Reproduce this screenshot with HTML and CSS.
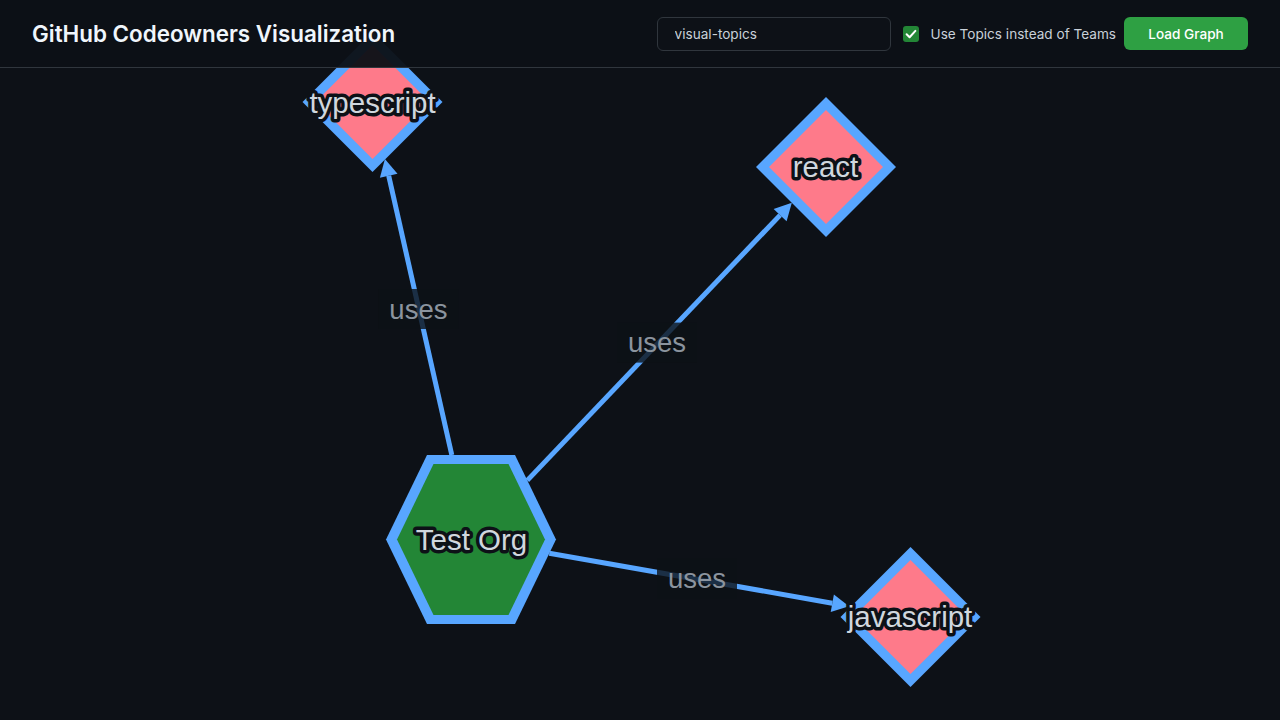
FILE: index.html
```html
<!DOCTYPE html>
<html lang="en">
<head>
<meta charset="utf-8">
<title>GitHub Codeowners Visualization</title>
<link rel="stylesheet" href="styles.css">
</head>
<body>
<header class="topbar">
  <h1 class="title">GitHub Codeowners Visualization</h1>
  <div class="controls">
    <input class="org-input" type="text" value="visual-topics">
    <label class="toggle">
      <span class="checkbox">
        <svg width="16" height="16" viewBox="0 0 16 16"><path d="M3.6 8.3 L6.6 11.2 L12.4 4.9" fill="none" stroke="#ffffff" stroke-width="2" stroke-linecap="round" stroke-linejoin="round"/></svg>
      </span>
      <span class="toggle-text">Use Topics instead of Teams</span>
    </label>
    <button class="load-btn" type="button">Load Graph</button>
  </div>
</header>
<main class="canvas">
  <svg class="graph" width="1280" height="652" viewBox="0 68 1280 652">
    <g class="edges">
      <line x1="451.8" y1="455" x2="388.7" y2="175.7" class="edge"/>
      <polygon points="384.9,159.1 397.5,173.7 379.9,177.7" class="arrow"/>
      <line x1="527.3" y1="480.4" x2="780.1" y2="215.1" class="edge"/>
      <polygon points="791.8,202.8 786.6,221.3 773.6,208.9" class="arrow"/>
      <line x1="549.3" y1="553.3" x2="832.3" y2="603.2" class="edge"/>
      <polygon points="849,606.2 830.7,612.1 833.9,594.4" class="arrow"/>
    </g>
    <g class="edge-labels">
      <rect x="378.4" y="289" width="80" height="40" class="label-bg"/>
      <text x="418.4" y="309" class="edge-label">uses</text>
      <rect x="617" y="322.6" width="80" height="40" class="label-bg"/>
      <text x="657" y="342.6" class="edge-label">uses</text>
      <rect x="657" y="558.5" width="80" height="40" class="label-bg"/>
      <text x="697" y="578.5" class="edge-label">uses</text>
    </g>
    <g class="nodes">
      <polygon points="372.5,32 442.5,102 372.5,172 302.5,102" class="node-border"/>
      <polygon points="372.5,45 429.5,102 372.5,159 315.5,102" class="topic-fill"/>
      <polygon points="826,97 896,167 826,237 756,167" class="node-border"/>
      <polygon points="826,110 883,167 826,224 769,167" class="topic-fill"/>
      <polygon points="910.5,547 980.5,617 910.5,687 840.5,617" class="node-border"/>
      <polygon points="910.5,560 967.5,617 910.5,674 853.5,617" class="topic-fill"/>
      <polygon points="386,539.5 427,455 515,455 556,539.5 515,624 427,624" class="node-border"/>
      <polygon points="397,539.5 433.5,464 508.5,464 545,539.5 508.5,615 433.5,615" class="org-fill"/>
    </g>
    <g class="node-labels">
      <text x="372.5" y="102.5" class="node-label">typescript</text>
      <text x="825.5" y="166.5" class="node-label">react</text>
      <text x="910" y="616.5" class="node-label">javascript</text>
      <text x="471.5" y="539" class="node-label">Test Org</text>
    </g>
  </svg>
</main>
</body>
</html>
```
FILE: styles.css
```css
* { box-sizing: border-box; }
html, body {
  margin: 0;
  padding: 0;
  background: #0d1117;
  width: 1280px;
  height: 720px;
  overflow: hidden;
  font-family: Inter, "Noto Sans", sans-serif;
}
.topbar {
  position: relative;
  z-index: 2;
  height: 68px;
  display: flex;
  align-items: center;
  justify-content: space-between;
  padding: 0 32px;
  background: rgba(13, 17, 23, 0.96);
  border-bottom: 1px solid #30363d;
}
.title {
  margin: 0;
  font-size: 22.4px;
  font-weight: 600;
  color: #f0f6fc;
}
.controls {
  display: flex;
  align-items: center;
}
.org-input {
  width: 234px;
  height: 34px;
  margin: 0 12px 0 0;
  padding: 0 17px;
  background: #0d1117;
  border: 1px solid #30363d;
  border-radius: 6px;
  color: #c9d1d9;
  font-family: Inter, "Noto Sans", sans-serif;
  font-size: 13.6px;
  outline: none;
}
.toggle {
  display: flex;
  align-items: center;
  gap: 12px;
  margin-right: 8px;
}
.checkbox {
  width: 16px;
  height: 16px;
  border-radius: 3px;
  background: #238636;
  display: flex;
}
.toggle-text {
  font-size: 13.6px;
  color: #c9d1d9;
}
.load-btn {
  width: 124px;
  height: 33px;
  border: none;
  border-radius: 6px;
  background: #2ea043;
  color: #ffffff;
  font-family: Inter, "Noto Sans", sans-serif;
  font-size: 13.6px;
  font-weight: 500;
}
.canvas {
  position: relative;
  z-index: 1;
  height: 652px;
}
.graph {
  display: block;
  overflow: visible;
}
.edge {
  stroke: #58a6ff;
  stroke-width: 5;
}
.arrow {
  fill: #58a6ff;
}
.label-bg {
  fill: #0d1117;
  opacity: 0.8;
}
.edge-label {
  font-family: "Liberation Sans", Arial, sans-serif;
  font-size: 27.5px;
  fill: #8b949e;
  text-anchor: middle;
  dominant-baseline: central;
}
.node-border {
  fill: #58a6ff;
}
.topic-fill {
  fill: #fe7a8a;
}
.org-fill {
  fill: #238636;
}
.node-label {
  font-family: "Liberation Sans", Arial, sans-serif;
  font-size: 29.5px;
  fill: #d0d7de;
  stroke: #0d1117;
  stroke-width: 7;
  stroke-linejoin: round;
  paint-order: stroke;
  text-anchor: middle;
  dominant-baseline: central;
}
```
